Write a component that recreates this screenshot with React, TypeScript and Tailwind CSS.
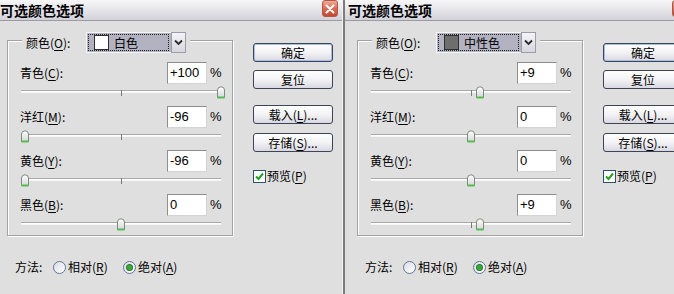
import React from 'react';

type Row = { label: string; key: string; value: number };

const cjk = "font-['Noto_Sans_CJK_SC',sans-serif]";

function U({ children }: { children: React.ReactNode }) {
  return <span className="underline underline-offset-[2px] decoration-1">{children}</span>;
}

function Label({ name, k }: { name: string; k: string }) {
  return (
    <span>
      {name}(<U>{k}</U>):
    </span>
  );
}

function fmt(v: number) {
  return v > 0 ? `+${v}` : `${v}`;
}

function Thumb() {
  return (
    <svg width="10" height="13" viewBox="0 0 10 13">
      <defs>
        <linearGradient id="tg" x1="0" y1="0" x2="0" y2="1">
          <stop offset="0" stopColor="#ffffff" />
          <stop offset="1" stopColor="#d6d6d6" />
        </linearGradient>
      </defs>
      <path d="M1.5 4 Q1.5 1 5 0.8 Q8.5 1 8.5 4 L8.5 11.5 L1.5 11.5 Z" fill="url(#tg)" stroke="#7d8a7d" strokeWidth="1" />
      <line x1="1.5" y1="11.5" x2="8.5" y2="11.5" stroke="#4fbf4f" strokeWidth="2" />
    </svg>
  );
}

function Slider({ value }: { value: number }) {
  return (
    <div className="relative ml-[13px] w-[200px] h-[22px]">
      <div className="absolute left-0 right-0 top-[6px] h-[3px] border-t border-[#a8a8a8] border-b border-b-[#f6f6f6] bg-white" />
      <div className="absolute left-[100px] top-[6px] w-px h-[6px] bg-[#7a7a7a]" />
      <div className="absolute top-[2px]" style={{ left: value + 100 - 5 }}>
        <Thumb />
      </div>
    </div>
  );
}

function SliderRow({ row }: { row: Row }) {
  return (
    <div>
      <div className="flex items-center h-[22px] pl-[12px]">
        <div className="w-[147px] text-[12px]">
          <Label name={row.label} k={row.key} />
        </div>
        <div className="w-[40px] h-[22px] bg-white border border-[#8e8e8e] border-b-[#d4d4d4] border-r-[#d4d4d4] flex items-center pl-[2px] font-['Liberation_Sans',sans-serif] text-[13px]">
          {fmt(row.value)}
        </div>
        <span className="ml-[3px] font-['Liberation_Sans',sans-serif] text-[13px]">%</span>
      </div>
      <Slider value={row.value} />
    </div>
  );
}

function Btn({ children, def }: { children: React.ReactNode; def?: boolean }) {
  return (
    <div
      className={`h-[19px] w-[80px] shrink-0 rounded-[3px] border border-[#3c4558] bg-gradient-to-b from-white via-[#f3f3f5] to-[#d9d8e2] flex items-center justify-center text-[12px] ${
        def ? 'shadow-[inset_0_0_0_1px_#a6bde8]' : ''
      }`}
    >
      {children}
    </div>
  );
}

function Radio({ on }: { on?: boolean }) {
  return (
    <span className="w-[13px] h-[13px] rounded-full border border-[#5d7696] bg-gradient-to-br from-[#dcdde4] to-white flex items-center justify-center">
      {on && <span className="w-[5px] h-[5px] rounded-full bg-[#3aa93a] shadow-[0_0_0_1px_#2c7a2c]" />}
    </span>
  );
}

function Close() {
  return (
    <div className="w-[16px] h-[17px] shrink-0 rounded-[3px] border border-[#b05848] bg-gradient-to-b from-[#eeaa9c] via-[#dc6a52] to-[#c24a34] flex items-center justify-center">
      <svg width="10" height="10" viewBox="0 0 10 10">
        <path d="M1.5 1.5 L8.5 8.5 M8.5 1.5 L1.5 8.5" stroke="#fff" strokeWidth="2" strokeLinecap="round" />
      </svg>
    </div>
  );
}

function Dialog({
  second,
  swatch,
  colorName,
  rows,
}: {
  second?: boolean;
  swatch: string;
  colorName: string;
  rows: Row[];
}) {
  return (
    <div
      className={`flex flex-col shrink-0 overflow-hidden ${
        second ? 'w-[331px] border-l-2 border-[#7c7c7c]' : 'w-[343px] border-r border-[#f2f2f2]'
      }`}
    >
      <div className="h-[21px] shrink-0 flex items-start bg-gradient-to-b from-[#f7f7f9] to-[#d3d2da] border-b border-[#9a9aa2]">
        <div className={`${second ? 'w-[327px] pl-[3px]' : 'w-[322px]'} shrink-0 h-[20px] flex items-center text-[14px] font-bold`}>
          可选颜色选项
        </div>
        <Close />
      </div>
      <div className={`flex flex-1 ${second ? 'pl-[5px]' : ''}`}>
        <div className="w-[253px] shrink-0">
          <div className="relative ml-[7px] mt-[19px] w-[226px] h-[196px] border border-[#a2a2a2] shadow-[inset_1px_1px_0_#fff,1px_1px_0_#fff] pt-[21px]">
            <div className="absolute left-[14px] top-[-9px] flex items-center px-[4px] bg-[#dfdfdf] h-[21px]">
              <span className="text-[12px] w-[60px]">
                <Label name="颜色" k="O" />
              </span>
              <div className="flex h-[21px] w-[100px]">
                <div className="flex-1 flex items-center border border-[#f4f4f4] border-r-0 bg-[#b3b2c0] outline-1 outline-dotted outline-[#202020] -outline-offset-[3px]">
                  <span className="ml-[7px] w-[15px] h-[15px] border border-[#303030]" style={{ background: swatch }} />
                  <span className="ml-[5px] text-[12px]">{colorName}</span>
                </div>
                <div className="w-[15px] flex items-center justify-center bg-gradient-to-b from-[#f4f4f8] to-[#d6d6de] border border-[#9c9ca8]">
                  <svg width="9" height="7" viewBox="0 0 9 7">
                    <path d="M1 1.5 L4.5 5 L8 1.5" stroke="#2a2a2a" strokeWidth="1.8" fill="none" />
                  </svg>
                </div>
              </div>
            </div>
            {rows.map((r) => (
              <SliderRow key={r.key} row={r} />
            ))}
          </div>
          <div className="flex items-center h-[16px] mt-[23px] ml-[15px] text-[12px]">
            <span className="w-[38px]">方法:</span>
            <Radio />
            <span className="ml-[2px] w-[55px]">
              相对(<U>R</U>)
            </span>
            <Radio on />
            <span className="ml-[2px]">
              绝对(<U>A</U>)
            </span>
          </div>
        </div>
        <div className="w-[80px] shrink-0 mt-[22px] flex flex-col">
          <Btn def>确定</Btn>
          <div className="mt-[8px]">
            <Btn>复位</Btn>
          </div>
          <div className="mt-[16px]">
            <Btn>
              载入(<U>L</U>)...
            </Btn>
          </div>
          <div className="mt-[9px]">
            <Btn>
              存储(<U>S</U>)...
            </Btn>
          </div>
          <div className="mt-[15px] flex items-center text-[12px]">
            <span className="w-[13px] h-[13px] bg-white border border-[#2f4f6f] flex items-center justify-center">
              <svg width="9" height="9" viewBox="0 0 9 9">
                <path d="M1 4.5 L3.5 7 L8 1.5" stroke="#22a022" strokeWidth="2" fill="none" />
              </svg>
            </span>
            <span className="ml-[1px]">
              预览(<U>P</U>)
            </span>
          </div>
        </div>
      </div>
    </div>
  );
}

export default function App() {
  return (
    <div className={`flex w-[674px] h-[294px] overflow-hidden bg-[#dfdfdf] text-black ${cjk}`}>
      <Dialog
        swatch="#ffffff"
        colorName="白色"
        rows={[
          { label: '青色', key: 'C', value: 100 },
          { label: '洋红', key: 'M', value: -96 },
          { label: '黄色', key: 'Y', value: -96 },
          { label: '黑色', key: 'B', value: 0 },
        ]}
      />
      <Dialog
        second
        swatch="#6e6e6e"
        colorName="中性色"
        rows={[
          { label: '青色', key: 'C', value: 9 },
          { label: '洋红', key: 'M', value: 0 },
          { label: '黄色', key: 'Y', value: 0 },
          { label: '黑色', key: 'B', value: 9 },
        ]}
      />
    </div>
  );
}
